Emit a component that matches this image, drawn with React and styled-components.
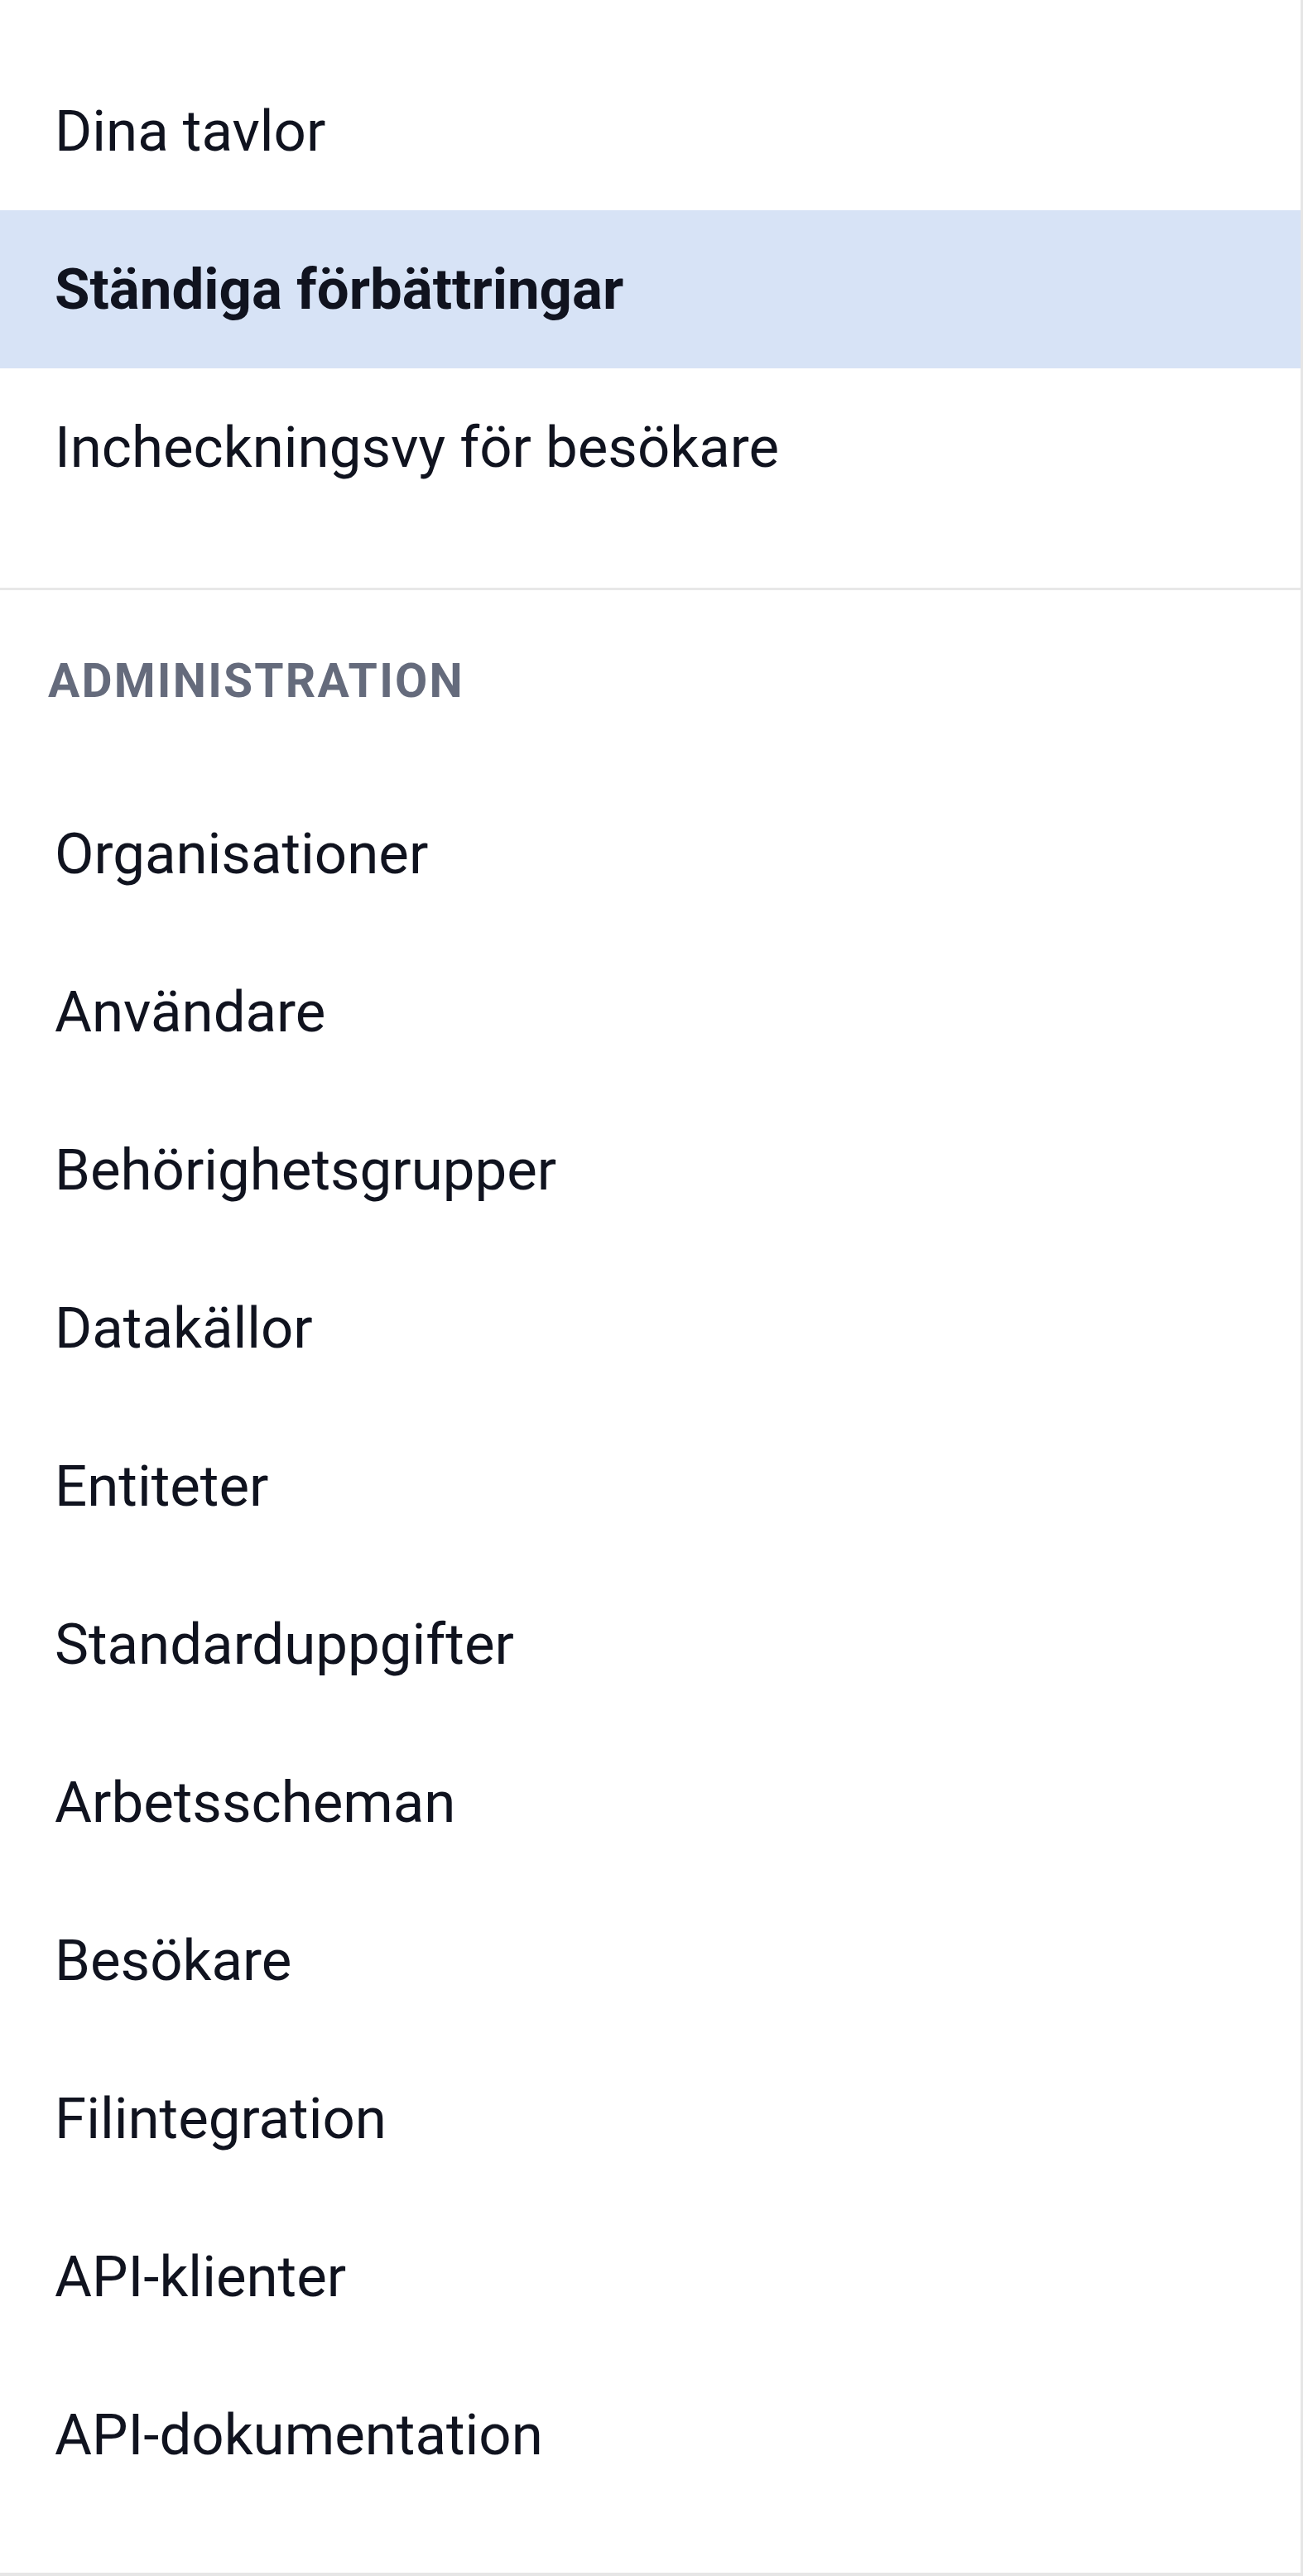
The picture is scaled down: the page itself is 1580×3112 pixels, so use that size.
import React from 'react'
import styled, { createGlobalStyle } from 'styled-components'

const GlobalStyle = createGlobalStyle`
  html, body {
    margin: 0;
    padding: 0;
    background: #ffffff;
  }
  body {
    font-family: Roboto, "Noto Sans", "Liberation Sans", sans-serif;
    -webkit-font-smoothing: antialiased;
  }
`

const Sidebar = styled.nav`
  width: 1571px;
  height: 3108px;
  box-sizing: content-box;
  border-right: 3px solid #e6e6e6;
  border-bottom: 4px solid #e6e6e6;
  background: #ffffff;
  display: flex;
  flex-direction: column;
`

const Section = styled.div`
  display: flex;
  flex-direction: column;
  padding-top: ${p => p.$top || 0}px;
  padding-bottom: ${p => p.$bottom || 0}px;
`

const Divider = styled.hr`
  margin: 0;
  border: 0;
  height: 3px;
  background: #e8e8e8;
`

const Heading = styled.div`
  height: 223px;
  box-sizing: border-box;
  padding: 81px 0 0 58px;
  font-size: 57px;
  line-height: 1;
  font-weight: 700;
  letter-spacing: 2.2px;
  color: #656b7c;
  text-transform: uppercase;
`

const Item = styled.a`
  height: 191px;
  display: flex;
  align-items: center;
  padding-left: 66px;
  font-size: 69px;
  font-weight: ${p => (p.$active ? 700 : 400)};
  color: #10131f;
  background: ${p => (p.$active ? '#d7e3f6' : 'transparent')};
  text-decoration: none;
  white-space: nowrap;
`

const boards = [
  { label: 'Dina tavlor' },
  { label: 'Ständiga förbättringar', active: true },
  { label: 'Incheckningsvy för besökare' },
]

const admin = [
  'Organisationer',
  'Användare',
  'Behörighetsgrupper',
  'Datakällor',
  'Entiteter',
  'Standarduppgifter',
  'Arbetsscheman',
  'Besökare',
  'Filintegration',
  'API-klienter',
  'API-dokumentation',
]

const App = () => {
  return (
    <>
      <GlobalStyle />
      <Sidebar>
        <Section $top={63} $bottom={74}>
          {boards.map(b => (
            <Item key={b.label} href='#' $active={b.active}>{b.label}</Item>
          ))}
        </Section>
        <Divider />
        <Heading>Administration</Heading>
        <Section>
          {admin.map(label => (
            <Item key={label} href='#'>{label}</Item>
          ))}
        </Section>
      </Sidebar>
    </>
  )
}

export default App
